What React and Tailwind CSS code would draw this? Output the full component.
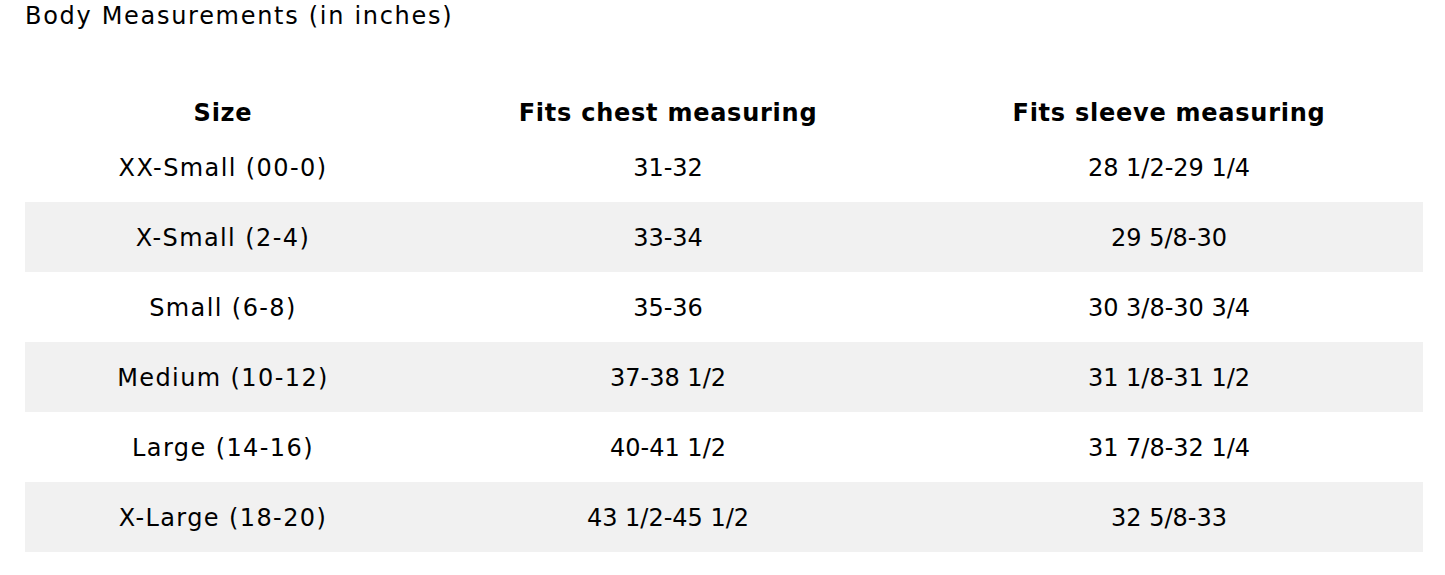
const rows = [
  ["XX-Small (00-0)", "31-32", "28 1/2-29 1/4"],
  ["X-Small (2-4)", "33-34", "29 5/8-30"],
  ["Small (6-8)", "35-36", "30 3/8-30 3/4"],
  ["Medium (10-12)", "37-38 1/2", "31 1/8-31 1/2"],
  ["Large (14-16)", "40-41 1/2", "31 7/8-32 1/4"],
  ["X-Large (18-20)", "43 1/2-45 1/2", "32 5/8-33"],
];

export default function App() {
  return (
    <div className="w-[1445px] h-[575px] bg-white pl-[25px] pr-[22px] text-black font-['DejaVu_Sans',sans-serif] overflow-hidden">
      <h2 className="text-[24px] leading-[32px] tracking-[1.7px] font-normal">Body Measurements (in inches)</h2>
      <table className="w-full mt-[58px] border-collapse text-[24px]">
        <thead>
          <tr className="h-[42px]">
            <th className="w-[396px] pt-[4px] font-bold tracking-[0.75px] text-center align-middle">Size</th>
            <th className="w-[494px] pt-[4px] font-bold tracking-[0.75px] text-center align-middle">Fits chest measuring</th>
            <th className="pt-[4px] font-bold tracking-[0.75px] text-center align-middle">Fits sleeve measuring</th>
          </tr>
        </thead>
        <tbody>
          {rows.map((r, i) => (
            <tr key={i} className={`h-[70px] ${i % 2 === 1 ? "bg-[#f1f1f1]" : ""}`}>
              <td className="pt-[1px] text-center align-middle tracking-[1.4px]">{r[0]}</td>
              <td className="pt-[1px] text-center align-middle">{r[1]}</td>
              <td className="pt-[1px] text-center align-middle">{r[2]}</td>
            </tr>
          ))}
        </tbody>
      </table>
    </div>
  );
}
